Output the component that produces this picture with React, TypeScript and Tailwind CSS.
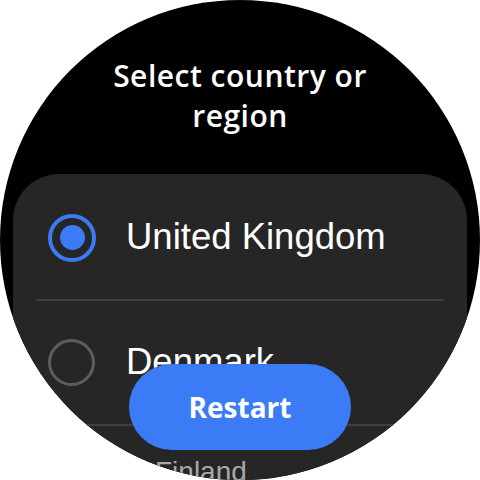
import React from "react";

export default function App() {
  return (
    <div className="w-[480px] h-[480px] bg-white">
      <div className="relative w-[480px] h-[480px] rounded-full overflow-hidden bg-black">
        <div
          className="pt-[56px] text-center text-white font-semibold text-[30px] leading-[40px] tracking-[0.5px]"
          style={{ fontFamily: "'Open Sans', 'Noto Sans', sans-serif" }}
        >
          Select country or
          <br />
          region
        </div>
        <div
          className="mt-[38px] mx-[13px] rounded-[46px] bg-[#262626] flex flex-col"
          style={{ fontFamily: "'Liberation Sans', Arial, sans-serif" }}
        >
          <div className="h-[125px] flex items-center pl-[35px] pt-[2px]">
            <div className="w-[48px] h-[48px] rounded-full border-[4px] border-[#3b7bf6] flex items-center justify-center">
              <div className="w-[25px] h-[25px] rounded-full bg-[#3b7bf6]" />
            </div>
            <span className="ml-[30px] text-white text-[36.5px]">United Kingdom</span>
          </div>
          <div className="mx-[23px] h-[2px] bg-[#3f3f3f]" />
          <div className="h-[123px] flex items-center pl-[35px]">
            <div className="w-[47px] h-[47px] rounded-full border-[3px] border-[#5e5e5e]" />
            <span className="ml-[31px] text-white text-[36.5px]">Denmark</span>
          </div>
          <div className="mx-[23px] h-[2px] bg-[#3f3f3f]" />
          <div className="h-[80px] pl-[142px] pt-[32px]">
            <span className="text-[#a8a8a8] text-[28px] leading-none">Finland</span>
          </div>
        </div>
        <button
          className="absolute left-[129px] top-[364px] w-[222px] h-[86px] rounded-full bg-[#3b7bf6] text-white font-bold text-[28px] flex items-center justify-center"
          style={{ fontFamily: "'Open Sans', 'Noto Sans', sans-serif" }}
        >
          Restart
        </button>
      </div>
    </div>
  );
}
